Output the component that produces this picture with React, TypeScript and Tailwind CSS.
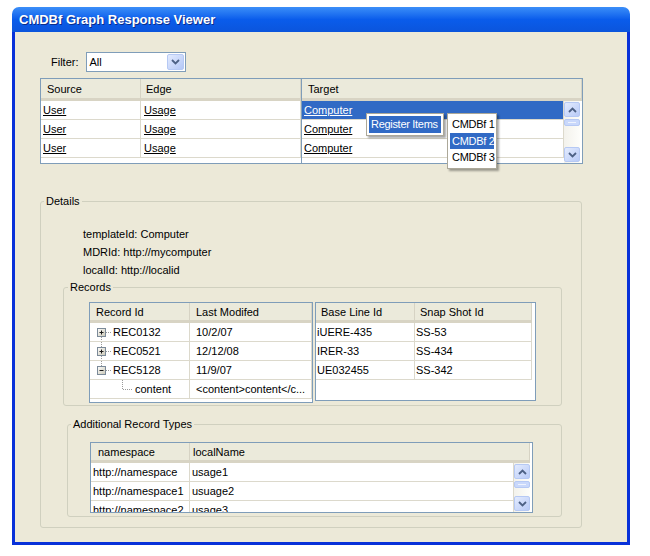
import React from "react";

const ChevUp = () => (
  <svg width="9" height="6" viewBox="0 0 9 6">
    <polyline points="1,5 4.5,1.5 8,5" fill="none" stroke="#4d6185" strokeWidth="1.8" />
  </svg>
);
const ChevDown = () => (
  <svg width="9" height="6" viewBox="0 0 9 6">
    <polyline points="1,1 4.5,4.5 8,1" fill="none" stroke="#4d6185" strokeWidth="1.8" />
  </svg>
);

function ScrollBtn({ up }: { up: boolean }) {
  return (
    <div className="h-[15px] w-full shrink-0 rounded-[2px] border border-[#b6c9f4] bg-gradient-to-br from-[#e3ebfe] to-[#b9cbf7] flex items-center justify-center">
      {up ? <ChevUp /> : <ChevDown />}
    </div>
  );
}

function ScrollBar() {
  return (
    <div className="w-[16px] shrink-0 flex flex-col bg-gradient-to-r from-[#f3f2ec] to-[#fdfdfa] py-[1px]">
      <ScrollBtn up />
      <div className="mt-[2px] h-[7px] rounded-[2px] border border-[#b6c9f4] bg-[#c9d8fb] flex flex-col justify-center px-[3px]">
        <div className="h-px bg-[#eef3fe]" />
      </div>
      <div className="flex-1" />
      <ScrollBtn up={false} />
    </div>
  );
}

function Hd({ className, children }: { className: string; children?: React.ReactNode }) {
  return (
    <div className={"h-full flex items-center border-r border-[#d6d3c4] shadow-[inset_0_-3px_0_#d8d4c4] whitespace-nowrap " + className}>
      <span className="-mt-[1px]">{children}</span>
    </div>
  );
}

function Cell({ className, children }: { className: string; children?: React.ReactNode }) {
  return (
    <div className={"h-[19px] flex items-center border-r border-b border-[#dcd9cc] whitespace-nowrap overflow-hidden " + className}>
      {children}
    </div>
  );
}

function TreeIcon({ kind, plus }: { kind: "first" | "mid" | "last"; plus: boolean }) {
  return (
    <svg width="23" height="19" className="shrink-0">
      <defs>
        <linearGradient id="tb" x1="0" y1="0" x2="1" y2="1">
          <stop offset="0" stopColor="#ffffff" />
          <stop offset="1" stopColor="#c9c6b4" />
        </linearGradient>
      </defs>
      {kind !== "first" && (
        <line x1="11.5" y1="0" x2="11.5" y2="5" stroke="#9a9a9a" strokeDasharray="1 1" />
      )}
      {kind !== "last" && (
        <line x1="11.5" y1="14" x2="11.5" y2="19" stroke="#9a9a9a" strokeDasharray="1 1" />
      )}
      <line x1="16" y1="9.5" x2="22" y2="9.5" stroke="#9a9a9a" strokeDasharray="1 1" />
      <rect x="7.5" y="5.5" width="8" height="8" fill="url(#tb)" stroke="#7b8a99" />
      <line x1="9.5" y1="9.5" x2="13.5" y2="9.5" stroke="#1a1a1a" />
      {plus && <line x1="11.5" y1="7.5" x2="11.5" y2="11.5" stroke="#1a1a1a" />}
    </svg>
  );
}

export default function App() {
  const top = [0, 1, 2];
  const recs = [
    ["REC0132", "10/2/07", "iUERE-435", "SS-53"],
    ["REC0521", "12/12/08", "IRER-33", "SS-434"],
    ["REC5128", "11/9/07", "UE032455", "SS-342"],
  ];
  const kinds: ("first" | "mid" | "last")[] = ["first", "mid", "last"];
  const extra = [
    ["http://namespace", "usage1"],
    ["http://namespace1", "usuage2"],
    ["http://namespace2", "usage3"],
  ];
  return (
    <div className="w-[650px] h-[556px] bg-white pt-[7px] pl-[12px] font-['Liberation_Sans',Arial,sans-serif] text-[11px] text-black">
      <div className="w-[618px] h-[538px] flex flex-col">
        {/* title bar */}
        <div className="h-[25px] shrink-0 rounded-t-[7px] bg-gradient-to-b from-[#3b8ef8] via-[#0a5ceb] to-[#0b55dc] pl-[7px] flex items-center">
          <span className="text-white font-bold text-[13px] [text-shadow:1px_1px_0_#0b2c8a]">
            CMDBf Graph Response Viewer
          </span>
        </div>
        {/* body */}
        <div className="flex-1 border-x-[3px] border-b-[3px] border-[#0831d9] bg-[#ece9d8] pl-[25px]">
          {/* filter */}
          <div className="mt-[20px] h-[20px] pl-[11px] flex items-center">
            <span>Filter:</span>
            <div className="ml-[7px] w-[100px] h-[20px] border border-[#7f9db9] bg-white flex items-center">
              <span className="flex-1 pl-[3px]">All</span>
              <div className="w-[17px] h-[16px] mr-[1px] rounded-[2px] border border-[#b6c9f4] bg-gradient-to-br from-[#e3ebfe] to-[#b4c7f6] flex items-center justify-center">
                <ChevDown />
              </div>
            </div>
          </div>

          {/* top table */}
          <div className="relative mt-[6px] w-[543px] h-[86px] border border-[#7f9db9] bg-white flex">
            <div className="w-[260px] flex flex-col">
              <div className="h-[22px] flex bg-[#ebeadb]">
                <Hd className="w-[100px] pl-[6px]">Source</Hd>
                <Hd className="flex-1 pl-[5px]">Edge</Hd>
              </div>
              {top.map((i) => (
                <div key={i} className="flex">
                  <Cell className="w-[100px] pl-[2px]">
                    <span className="underline">User</span>
                  </Cell>
                  <Cell className="flex-1 pl-[3px]">
                    <span className="underline">Usage</span>
                  </Cell>
                </div>
              ))}
            </div>
            <div className="w-px bg-[#7f9db9]" />
            <div className="flex-1 flex flex-col">
              <div className="h-[22px] flex bg-[#ebeadb]">
                <Hd className="flex-1 pl-[6px]">Target</Hd>
              </div>
              <div className="flex flex-1">
                <div className="flex-1 flex flex-col">
                  {top.map((i) => (
                    <Cell
                      key={i}
                      className={
                        i === 0
                          ? "pl-[2px] bg-[#316ac5] text-white border-[#316ac5]"
                          : "pl-[2px]"
                      }
                    >
                      <span className="underline">Computer</span>
                    </Cell>
                  ))}
                </div>
                <ScrollBar />
                <div className="w-[2px]" />
              </div>
            </div>

            {/* popup menus */}
            <div className="absolute left-[325px] top-[34px] w-[78px] h-[23px] bg-white border border-[#aca899] p-[2px] shadow-[2px_2px_2px_rgba(0,0,0,0.35)]">
              <div className="h-[17px] bg-[#316ac5] text-white flex items-center pl-[2px] whitespace-nowrap tracking-[-0.3px]">
                Register Items
              </div>
            </div>
            <div className="absolute left-[406px] top-[34px] w-[50px] h-[56px] bg-white border border-[#aca899] p-[2px] shadow-[2px_2px_2px_rgba(0,0,0,0.35)] flex flex-col whitespace-nowrap tracking-[-0.3px]">
              <div className="h-[17px] flex items-center pl-[2px]">CMDBf 1</div>
              <div className="h-[17px] flex items-center pl-[2px] bg-[#316ac5] text-white">CMDBf 2</div>
              <div className="h-[17px] flex items-center pl-[2px]">CMDBf 3</div>
            </div>
          </div>

          {/* Details */}
          <fieldset className="mt-[31px] w-[542px] h-[333px] border border-[#d0d0bf] rounded-[3px]">
            <legend className="ml-[3px] px-[2px] leading-[13px]">Details</legend>
            <div className="mt-[17px] pl-[42px] flex flex-col leading-[18px]">
              <span>templateId: Computer</span>
              <span>MDRId: http://mycomputer</span>
              <span>localId: http://localid</span>
            </div>

            {/* Records */}
            <fieldset className="mt-[2px] ml-[22px] w-[499px] h-[125px] border border-[#d0d0bf] rounded-[3px]">
              <legend className="ml-[4px] px-[2px] leading-[13px]">Records</legend>
              <div className="mt-[8px] ml-[25px] flex items-start">
                <div className="w-[224px] h-[101px] border border-[#7f9db9] bg-white flex flex-col">
                  <div className="h-[20px] flex bg-[#ebeadb]">
                    <Hd className="w-[100px] pl-[6px]">Record Id</Hd>
                    <Hd className="flex-1 pl-[6px]">Last Modifed</Hd>
                  </div>
                  {recs.map((r, i) => (
                    <div key={i} className="flex">
                      <Cell className="w-[100px]">
                        <TreeIcon kind={kinds[i]} plus={i !== 2} />
                        <span>{r[0]}</span>
                      </Cell>
                      <Cell className="flex-1 pl-[6px]">{r[1]}</Cell>
                    </div>
                  ))}
                  <div className="flex">
                    <Cell className="w-[100px]">
                      <svg width="45" height="19" className="shrink-0">
                        <line x1="32.5" y1="0" x2="32.5" y2="9.5" stroke="#9a9a9a" strokeDasharray="1 1" />
                        <line x1="33" y1="9.5" x2="43" y2="9.5" stroke="#9a9a9a" strokeDasharray="1 1" />
                      </svg>
                      <span>content</span>
                    </Cell>
                    <Cell className="flex-1 pl-[6px]">&lt;content&gt;content&lt;/c...</Cell>
                  </div>
                </div>
                <div className="ml-[2px] w-[221px] h-[99px] border border-[#7f9db9] bg-white flex flex-col">
                  <div className="h-[20px] flex bg-[#ebeadb] mr-[3px]">
                    <Hd className="w-[99px] pl-[5px]">Base Line Id</Hd>
                    <Hd className="flex-1 pl-[5px]">Snap Shot Id</Hd>
                  </div>
                  {recs.map((r, i) => (
                    <div key={i} className="flex mr-[3px]">
                      <Cell className="w-[99px] pl-[1px]">{r[2]}</Cell>
                      <Cell className="flex-1 pl-[1px]">{r[3]}</Cell>
                    </div>
                  ))}
                </div>
              </div>
            </fieldset>

            {/* Additional Record Types */}
            <fieldset className="mt-[12px] ml-[26px] w-[495px] h-[99px] border border-[#d0d0bf] rounded-[3px]">
              <legend className="ml-[3px] px-[2px] leading-[13px]">Additional Record Types</legend>
              <div className="mt-[11px] ml-[22px] w-[443px] h-[71px] border border-[#7f9db9] bg-white flex flex-col overflow-hidden">
                <div className="h-[20px] shrink-0 flex bg-[#ebeadb] mr-[2px]">
                  <Hd className="w-[99px] pl-[7px]">namespace</Hd>
                  <Hd className="flex-1 pl-[3px]">localName</Hd>
                </div>
                <div className="flex flex-1 min-h-0">
                  <div className="flex-1 flex flex-col overflow-hidden">
                    {extra.map((r, i) => (
                      <div key={i} className="flex shrink-0">
                        <Cell className="w-[99px] pl-[2px]">{r[0]}</Cell>
                        <Cell className="flex-1 pl-[2px]">{r[1]}</Cell>
                      </div>
                    ))}
                  </div>
                  <ScrollBar />
                  <div className="w-[2px]" />
                </div>
              </div>
            </fieldset>
          </fieldset>
        </div>
      </div>
    </div>
  );
}
